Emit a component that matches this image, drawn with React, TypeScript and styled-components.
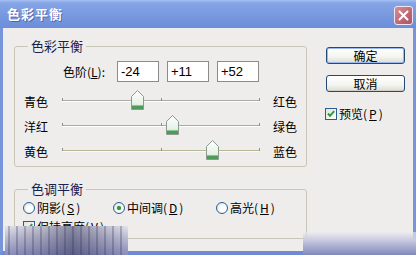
import React from 'react';
import styled, { createGlobalStyle } from 'styled-components';

const Global = createGlobalStyle`
  html, body { margin: 0; padding: 0; background: #eeedeb; }
  body { font-family: "Liberation Sans", "Noto Sans CJK SC", sans-serif; color: #000; }
  * { box-sizing: border-box; }
`;

const CJK = `"Noto Sans CJK SC", "Liberation Sans", sans-serif`;

const Window = styled.div`
  position: relative;
  width: 416px;
  height: 255px;
  overflow: hidden;
  display: flex;
  flex-direction: column;
  background: #eeedeb;
`;

const TitleBar = styled.div`
  height: 28px;
  flex: none;
  display: flex;
  align-items: flex-start;
  justify-content: space-between;
  padding: 0 3px 0 7px;
  background: linear-gradient(#a6c0f2 0, #85a5e6 3px, #7899e0 55%, #6c8ed9 100%);
`;

const Title = styled.span`
  margin-top: 6px;
  font-family: ${CJK};
  font-size: 13px;
  font-weight: bold;
  letter-spacing: 1px;
  line-height: 16px;
  color: #fff;
  text-shadow: 1px 1px 0 rgba(40, 60, 120, 0.5);
`;

const CloseButton = styled.div`
  margin-top: 6px;
  width: 19px;
  height: 19px;
  border: 1px solid #f2e6ee;
  border-radius: 3px;
  background: linear-gradient(135deg, #d58f98, #bd6774 60%, #a95565);
  display: flex;
  align-items: center;
  justify-content: center;
`;

const Frame = styled.div`
  flex: 1;
  display: flex;
  border-left: 3px solid #7895dc;
  border-right: 3px solid #7895dc;
  border-bottom: 4px solid #6f8ad3;
  padding: 11px 0 0 11px;
`;

const LeftColumn = styled.div`
  width: 293px;
  display: flex;
  flex-direction: column;
`;

const Group = styled.fieldset<{ $pt: number; $pl: number; $mt?: number }>`
  margin: ${p => p.$mt ?? 0}px 0 0 0;
  border: 1px solid #c8c5b6;
  border-radius: 3px;
  padding: ${p => p.$pt}px 0 3px ${p => p.$pl}px;
  min-width: 0;
`;

const Legend = styled.legend<{ $ml: number }>`
  margin-left: ${p => p.$ml}px;
  padding: 0 3px;
  font-family: ${CJK};
  font-size: 13px;
  line-height: 14px;
  color: #1a2050;
`;

const LevelRow = styled.div`
  display: flex;
  align-items: center;
  height: 21px;
  margin-left: 39px;
  gap: 8px;
`;

const LevelLabel = styled.label`
  width: 47px;
  margin-right: -1px;
  font-family: ${CJK};
  font-size: 12px;
  white-space: nowrap;
`;

const LevelInput = styled.div`
  width: 42px;
  height: 21px;
  border: 1px solid #8b8b8b;
  background: #fff;
  padding: 0 3px;
  font-family: "Liberation Sans", sans-serif;
  font-size: 13px;
  line-height: 19px;
`;

const Sliders = styled.div`
  margin-top: 6px;
  display: flex;
  flex-direction: column;
`;

const SliderRow = styled.div`
  display: grid;
  grid-template-columns: 38px 198px 1fr;
  height: 25px;
`;

const SideLabel = styled.span<{ $right?: boolean }>`
  padding-top: 6px;
  padding-left: ${p => (p.$right ? 13 : 0)}px;
  font-family: ${CJK};
  font-size: 12px;
  line-height: 16px;
  white-space: nowrap;
`;

const Track = styled.div<{ $yellow?: boolean }>`
  position: relative;
  height: 25px;
  &::before {
    content: '';
    position: absolute;
    left: 0;
    right: 0;
    top: 12px;
    height: 1px;
    background: ${p => (p.$yellow ? '#b7b79a' : '#a9a9a6')};
    box-shadow: 0 1px 0 ${p => (p.$yellow ? '#fbfbe4' : '#ffffff')};
  }
`;

const Tick = styled.span`
  position: absolute;
  top: 10px;
  width: 1px;
  height: 3px;
  background: #8e8e8e;
`;

const Thumb = styled.svg`
  position: absolute;
  top: 2px;
  width: 13px;
  height: 20px;
  margin-left: -6px;
`;

const RadioRow = styled.div`
  display: grid;
  grid-template-columns: 90px 103px auto;
  height: 16px;
  align-items: center;
`;

const Option = styled.label`
  display: flex;
  align-items: center;
  gap: 2px;
  font-family: ${CJK};
  font-size: 12px;
  line-height: 16px;
  white-space: nowrap;
`;

const RadioCircle = styled.span<{ $on?: boolean }>`
  width: 12px;
  height: 12px;
  flex: none;
  border-radius: 50%;
  border: 1px solid #2a5f93;
  background: radial-gradient(circle at 60% 60%, #ffffff 30%, #d8d8d0 100%);
  display: flex;
  align-items: center;
  justify-content: center;
  &::after {
    content: '';
    display: ${p => (p.$on ? 'block' : 'none')};
    width: 4px;
    height: 4px;
    border-radius: 50%;
    background: #2f9a3a;
    box-shadow: 0 0 1px #2f9a3a;
  }
`;

const CheckRow = styled.div<{ $mt: number }>`
  margin-top: ${p => p.$mt}px;
  height: 16px;
  display: flex;
  align-items: center;
`;

const CheckBox = styled.span`
  width: 12px;
  height: 12px;
  flex: none;
  border: 1px solid #2a5f93;
  background: linear-gradient(135deg, #e4e4dc, #ffffff);
  display: flex;
  align-items: center;
  justify-content: center;
`;

const RightColumn = styled.div`
  margin-left: 18px;
  margin-top: 8px;
  display: flex;
  flex-direction: column;
  align-items: flex-start;
`;

const Button = styled.div<{ $default?: boolean }>`
  margin-left: 1px;
  width: 79px;
  height: 17px;
  border: 1px solid #23487a;
  border-radius: 3px;
  background: linear-gradient(#ffffff, #f4f4f0 60%, #dcdcd4);
  box-shadow: ${p => (p.$default ? 'inset 0 0 0 1px #9cb8ec' : 'inset 0 -1px 0 #d0d0c8')};
  display: flex;
  align-items: center;
  justify-content: center;
  font-family: ${CJK};
  font-size: 12px;
  line-height: 14px;
  & + & { margin-top: 11px; }
`;

const WatermarkLeft = styled.div`
  position: absolute;
  left: 5px;
  top: 226px;
  width: 123px;
  height: 29px;
  background:
    repeating-linear-gradient(90deg, rgba(50, 50, 90, 0) 0 3px, rgba(50, 50, 90, 0.28) 3px 5px, rgba(50, 50, 90, 0) 5px 8px),
    linear-gradient(90deg, rgba(0,0,0,0) 0, rgba(40, 40, 80, 0.2) 30%, rgba(30, 30, 70, 0.45) 55%, rgba(40, 40, 80, 0.2) 80%, rgba(0,0,0,0) 100%),
    linear-gradient(#e4e4ec 0, #bcbdd2 40%, #8a8eba 100%);
`;

const WatermarkRight = styled.div`
  position: absolute;
  left: 303px;
  top: 232px;
  width: 113px;
  height: 23px;
  background: linear-gradient(rgba(236, 236, 240, 0.6) 0, #c9cbe0 35%, #8088bb 100%);
`;

function ThumbIcon({ left }: { left: number }) {
  return (
    <Thumb viewBox="0 0 13 20" style={{ left }}>
      <defs>
        <linearGradient id="tg" x1="0" y1="0" x2="0" y2="1">
          <stop offset="0" stopColor="#ffffff" />
          <stop offset="0.7" stopColor="#e6f1e6" />
          <stop offset="1" stopColor="#b9d9bd" />
        </linearGradient>
      </defs>
      <path d="M6.5 0.5 L12.5 6.5 L12.5 19.5 L0.5 19.5 L0.5 6.5 Z" fill="url(#tg)" stroke="#8c9a90" />
      <rect x="1" y="15" width="11" height="4" fill="#4e9a5a" />
      <rect x="1" y="15" width="11" height="1" fill="#8cc494" />
    </Thumb>
  );
}

function Slider({ left, right, value, yellow }: { left: string; right: string; value: number; yellow?: boolean }) {
  const pos = 99 + (value / 100) * 99;
  return (
    <SliderRow>
      <SideLabel>{left}</SideLabel>
      <Track $yellow={yellow}>
        <Tick style={{ left: 0 }} />
        <Tick style={{ left: 99 }} />
        <Tick style={{ left: 197 }} />
        <ThumbIcon left={pos} />
      </Track>
      <SideLabel $right>{right}</SideLabel>
    </SliderRow>
  );
}

function Check() {
  return (
    <svg width="10" height="10" viewBox="0 0 10 10">
      <path d="M2 4.5 L4 6.8 L8.2 2.2" fill="none" stroke="#2a9a3a" strokeWidth="2" />
    </svg>
  );
}

export default function App() {
  return (
    <>
      <Global />
      <Window>
        <TitleBar>
          <Title>色彩平衡</Title>
          <CloseButton>
            <svg width="11" height="11" viewBox="0 0 11 11">
              <path d="M1.5 1.5 L9.5 9.5 M9.5 1.5 L1.5 9.5" stroke="#fff" strokeWidth="2" strokeLinecap="round" />
            </svg>
          </CloseButton>
        </TitleBar>
        <Frame>
          <LeftColumn>
            <Group $pt={8} $pl={9}>
              <Legend $ml={4}>色彩平衡</Legend>
              <LevelRow>
                <LevelLabel>色阶(<u>L</u>):</LevelLabel>
                <LevelInput>-24</LevelInput>
                <LevelInput>+11</LevelInput>
                <LevelInput>+52</LevelInput>
              </LevelRow>
              <Sliders>
                <Slider left="青色" right="红色" value={-24} />
                <Slider left="洋红" right="绿色" value={11} />
                <Slider left="黄色" right="蓝色" value={52} yellow />
              </Sliders>
            </Group>
            <Group $pt={4} $pl={8} $mt={15}>
              <Legend $ml={5}>色调平衡</Legend>
              <RadioRow>
                <Option><RadioCircle />阴影(<u>S</u>)</Option>
                <Option><RadioCircle $on />中间调(<u>D</u>)</Option>
                <Option><RadioCircle />高光(<u>H</u>)</Option>
              </RadioRow>
              <CheckRow $mt={3}>
                <Option><CheckBox><Check /></CheckBox>保持亮度(<u>V</u>)</Option>
              </CheckRow>
            </Group>
          </LeftColumn>
          <RightColumn>
            <Button $default>确定</Button>
            <Button>取消</Button>
            <CheckRow $mt={14}>
              <Option><CheckBox><Check /></CheckBox>预览(<u>P</u>)</Option>
            </CheckRow>
          </RightColumn>
        </Frame>
        <WatermarkLeft />
        <WatermarkRight />
      </Window>
    </>
  );
}
